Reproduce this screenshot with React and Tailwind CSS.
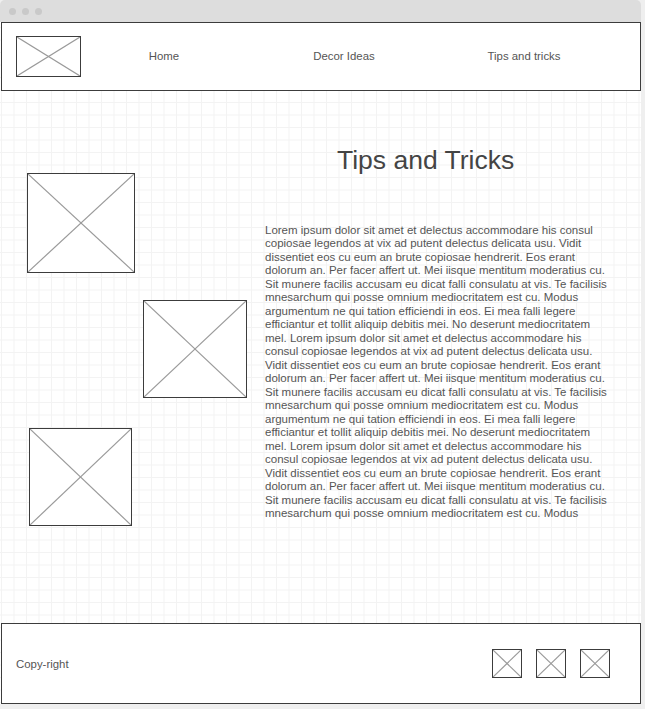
import React from "react";

function Placeholder({ className = "" }) {
  return (
    <div className={"relative border-[1.5px] border-[#3c3c3c] bg-white " + className}>
      <svg className="absolute inset-0 h-full w-full" viewBox="0 0 100 100" preserveAspectRatio="none">
        <line x1="0" y1="0" x2="100" y2="100" stroke="#9a9a9a" strokeWidth="1.2" vectorEffect="non-scaling-stroke" />
        <line x1="100" y1="0" x2="0" y2="100" stroke="#9a9a9a" strokeWidth="1.2" vectorEffect="non-scaling-stroke" />
      </svg>
    </div>
  );
}

const lines = [
  "Lorem ipsum dolor sit amet et delectus accommodare his consul",
  "copiosae legendos at vix ad putent delectus delicata usu. Vidit",
  "dissentiet eos cu eum an brute copiosae hendrerit. Eos erant",
  "dolorum an. Per facer affert ut. Mei iisque mentitum moderatius cu.",
  "Sit munere facilis accusam eu dicat falli consulatu at vis. Te facilisis",
  "mnesarchum qui posse omnium mediocritatem est cu. Modus",
  "argumentum ne qui tation efficiendi in eos. Ei mea falli legere",
  "efficiantur et tollit aliquip debitis mei. No deserunt mediocritatem",
  "mel. Lorem ipsum dolor sit amet et delectus accommodare his",
  "consul copiosae legendos at vix ad putent delectus delicata usu.",
  "Vidit dissentiet eos cu eum an brute copiosae hendrerit. Eos erant",
  "dolorum an. Per facer affert ut. Mei iisque mentitum moderatius cu.",
  "Sit munere facilis accusam eu dicat falli consulatu at vis. Te facilisis",
  "mnesarchum qui posse omnium mediocritatem est cu. Modus",
  "argumentum ne qui tation efficiendi in eos. Ei mea falli legere",
  "efficiantur et tollit aliquip debitis mei. No deserunt mediocritatem",
  "mel. Lorem ipsum dolor sit amet et delectus accommodare his",
  "consul copiosae legendos at vix ad putent delectus delicata usu.",
  "Vidit dissentiet eos cu eum an brute copiosae hendrerit. Eos erant",
  "dolorum an. Per facer affert ut. Mei iisque mentitum moderatius cu.",
  "Sit munere facilis accusam eu dicat falli consulatu at vis. Te facilisis",
  "mnesarchum qui posse omnium mediocritatem est cu. Modus",
];

export default function App() {
  return (
    <div className="h-[709px] w-[645px] overflow-hidden bg-[#efefef] font-['Liberation_Sans',Arial,sans-serif]">
      <div className="flex h-[704px] w-[641px] flex-col">
        {/* window title bar */}
        <div className="flex h-[22px] shrink-0 items-center gap-[6px] rounded-t-[5px] bg-[#dddddd] pl-[9px] pt-[1px]">
          <span className="h-[7px] w-[7px] rounded-full bg-[#c9c9c9]" />
          <span className="h-[7px] w-[7px] rounded-full bg-[#c9c9c9]" />
          <span className="h-[7px] w-[7px] rounded-full bg-[#c9c9c9]" />
        </div>

        <div className="flex flex-1 flex-col bg-white [background-image:linear-gradient(to_right,#f3f3f3_1px,transparent_1px),linear-gradient(to_bottom,#f3f3f3_1px,transparent_1px)] [background-size:12.5px_12.5px] [background-position:1px_5px]">
          {/* header */}
          <header className="ml-[1px] flex h-[69px] w-[640px] shrink-0 items-center border border-[#3c3c3c] bg-white pl-[14px]">
            <Placeholder className="h-[41px] w-[65px]" />
            <nav className="-ml-[7px] grid grid-cols-[180px_180px_180px] text-[11.4px] text-[#555555]">
              <span className="text-center">Home</span>
              <span className="text-center">Decor Ideas</span>
              <span className="text-center">Tips and tricks</span>
            </nav>
          </header>

          {/* main */}
          <main className="flex h-[532px] shrink-0">
            <div className="flex w-[265px] shrink-0 flex-col items-start">
              <Placeholder className="ml-[27px] mt-[82px] h-[100px] w-[108px]" />
              <Placeholder className="ml-[143px] mt-[27px] h-[98px] w-[104px]" />
              <Placeholder className="ml-[29px] mt-[30px] h-[98px] w-[103px]" />
            </div>
            <div className="flex flex-col">
              <h1 className="mt-[56px] pl-[72px] text-[26.5px] leading-[26.5px] text-[#444444]">Tips and Tricks</h1>
              <div className="mt-[50px] text-[11.5px] leading-[13.5px] text-[#555555]">
                {lines.map((l, i) => (
                  <div key={i} className="whitespace-nowrap">{l}</div>
                ))}
              </div>
            </div>
          </main>

          {/* footer */}
          <footer className="ml-[1px] flex h-[81px] w-[640px] shrink-0 items-center justify-between border border-[#3c3c3c] bg-white pl-[14px] pr-[30px]">
            <span className="pt-[3px] text-[11.4px] text-[#555555]">Copy-right</span>
            <div className="flex items-center gap-[14px]">
              <Placeholder className="h-[29px] w-[30px]" />
              <Placeholder className="h-[29px] w-[30px]" />
              <Placeholder className="h-[29px] w-[30px]" />
            </div>
          </footer>
        </div>
      </div>
    </div>
  );
}
